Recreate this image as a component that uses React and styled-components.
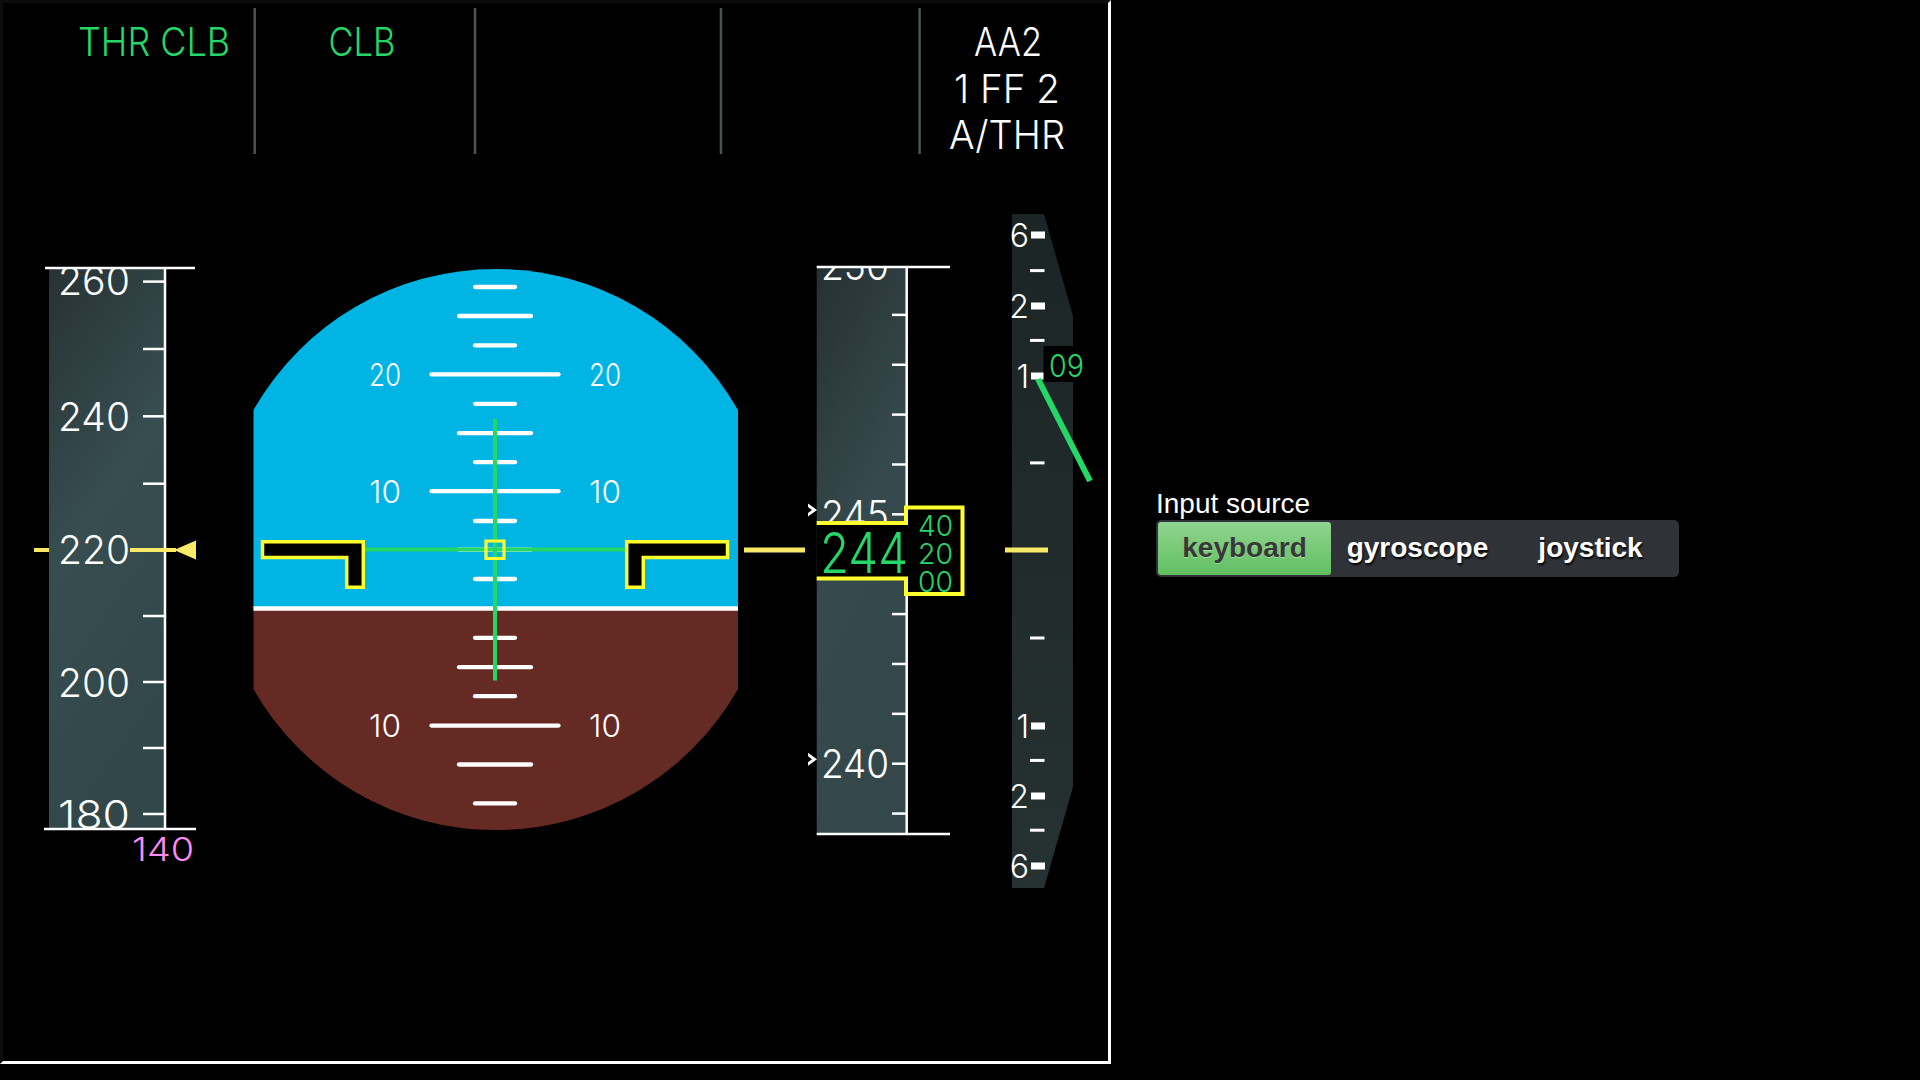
import React from 'react';
import styled, { createGlobalStyle } from 'styled-components';

const GREEN = '#24d767';
const YELLOW = '#ffff2e';
const PALE_YELLOW = '#f8ea66';
const MAGENTA = '#ff8cf4';
const WHITE = '#ffffff';
const SKY = '#00b4e3';
const GROUND = '#662a24';
const ECAM_FONT = '"Inter", "DejaVu Sans", sans-serif';

const GlobalStyle = createGlobalStyle`
  html, body {
    margin: 0;
    padding: 0;
    background: #000;
  }
  body {
    font-family: "Liberation Sans", Arial, sans-serif;
  }
`;

const Page = styled.div`
  display: flex;
  align-items: center;
  gap: 45px;
  height: 1064px;
`;

const Panel = styled.div`
  flex: none;
  width: 1105px;
  height: 1058px;
  border-style: solid;
  border-width: 3px;
  border-color: #0c0c0c #ffffff #ffffff #0c0c0c;
  background: #000;
`;

const Display = styled.svg`
  display: block;
  width: 1105px;
  height: 1058px;
`;

const Control = styled.div`
  display: flex;
  flex-direction: column;
`;

const ControlLabel = styled.div`
  font-family: "Liberation Sans", Arial, sans-serif;
  font-size: 28px;
  line-height: 32px;
  color: #fff;
`;

const Segmented = styled.div`
  display: grid;
  grid-template-columns: repeat(3, 1fr);
  box-sizing: border-box;
  width: 523px;
  height: 57px;
  padding: 2px;
  background: #2f3237;
  border-radius: 5px;
`;

const SegButton = styled.button`
  border: none;
  margin: 0;
  padding: 0;
  border-radius: 3px;
  font-family: "Liberation Sans", Arial, sans-serif;
  font-weight: bold;
  font-size: 28px;
  cursor: pointer;
  background: ${(p) => (p.$active ? 'linear-gradient(#90d390, #61c061)' : 'transparent')};
  color: ${(p) => (p.$active ? '#383838' : '#ffffff')};
  text-shadow: ${(p) => (p.$active ? '0 1px 0 rgba(255,255,255,0.35)' : '1px 2px 2px rgba(0,0,0,0.9)')};
`;

/* ---------- SVG parts ---------- */

const FmaDivider = styled.line`
  stroke: #495454;
  stroke-width: 2.5;
`;

const FmaText = styled.text`
  font-family: ${ECAM_FONT};
  font-weight: 300;
  font-size: 39px;
  fill: ${(p) => p.$color};
  text-anchor: middle;
`;

const TapeBody = styled.rect``;

const ScaleLine = styled.line`
  stroke: ${(p) => p.$color || WHITE};
  stroke-width: ${(p) => p.$w || 2.5};
  stroke-linecap: ${(p) => p.$cap || 'butt'};
`;

const TapeNumber = styled.text`
  font-family: ${ECAM_FONT};
  font-weight: 300;
  font-size: ${(p) => p.$size || 40}px;
  fill: ${(p) => p.$color || WHITE};
  text-anchor: end;
`;

const PitchLabel = styled.text`
  font-family: ${ECAM_FONT};
  font-weight: 300;
  font-size: 31px;
  fill: ${WHITE};
  text-anchor: ${(p) => p.$anchor};
`;

const Symbol = styled.path`
  fill: ${(p) => p.$fill || 'none'};
  stroke: ${(p) => p.$stroke || 'none'};
  stroke-width: ${(p) => p.$w || 3.5};
  stroke-linejoin: miter;
`;

const Readout = styled.text`
  font-family: ${ECAM_FONT};
  font-weight: 300;
  font-size: ${(p) => p.$size}px;
  fill: ${GREEN};
`;

const VsLabel = styled.text`
  font-family: ${ECAM_FONT};
  font-weight: 300;
  font-size: 32px;
  fill: ${WHITE};
  text-anchor: end;
`;

const Block = styled.rect`
  fill: ${(p) => p.$fill};
`;

/* ---------- data ---------- */

const fmaDividers = [254.7, 475, 721, 919.6];

const speedTicks = [281.6, 349, 416.3, 483.7, 549.8, 616, 682, 748, 814];
const speedLabels = [
  { v: '260', y: 280 },
  { v: '240', y: 416.3 },
  { v: '220', y: 549.8 },
  { v: '200', y: 682 },
  { v: '180', y: 814 },
];

const pitchMarks = [
  { y: 287, w: 40 },
  { y: 316, w: 72 },
  { y: 345.4, w: 40 },
  { y: 374.4, w: 127, label: '20' },
  { y: 403.8, w: 40 },
  { y: 433.2, w: 72 },
  { y: 462.2, w: 40 },
  { y: 491.2, w: 127, label: '10' },
  { y: 521, w: 40 },
  { y: 549.6, w: 72 },
  { y: 579, w: 40 },
  { y: 637.8, w: 40 },
  { y: 667.2, w: 72 },
  { y: 696.2, w: 40 },
  { y: 725.6, w: 127, label: '10' },
  { y: 764.5, w: 72 },
  { y: 803.4, w: 40 },
];

const altTicks = Array.from({ length: 12 }, (_, i) => 265 + i * 49.87);
const altLabels = [
  { v: '250', y: 265 },
  { v: '245', y: 514.4 },
  { v: '240', y: 763.7 },
];

const vsMajor = [
  { v: '6', y: 235 },
  { v: '2', y: 306 },
  { v: '1', y: 376 },
  { v: '1', y: 726 },
  { v: '2', y: 796 },
  { v: '6', y: 866 },
];
const vsMinor = [270.6, 340.4, 462.9, 638, 760.4, 830.2];

const drum = [
  { v: '60', y: 496.5 },
  { v: '40', y: 525 },
  { v: '20', y: 553.5 },
  { v: '00', y: 581.6 },
];

const ATT_CX = 495;
const attOutline =
  'M253.5,410 A278.6,278.6 0 0 1 738,410 L738,689 A278.6,278.6 0 0 1 253.5,689 Z';

function Pfd() {
  return (
    <Display viewBox="3 3 1105 1058">
      <defs>
        <linearGradient id="spdGrad" x1="0" y1="0" x2="0.3" y2="1">
          <stop offset="0" stopColor="#273234" />
          <stop offset="0.5" stopColor="#374d50" />
          <stop offset="1" stopColor="#32474a" />
        </linearGradient>
        <linearGradient id="altGrad" x1="0" y1="0" x2="0.3" y2="1">
          <stop offset="0" stopColor="#263033" />
          <stop offset="0.55" stopColor="#364a4d" />
          <stop offset="1" stopColor="#34484b" />
        </linearGradient>
        <linearGradient id="vsGrad" x1="0" y1="0" x2="0" y2="1">
          <stop offset="0" stopColor="#1c2526" />
          <stop offset="1" stopColor="#263132" />
        </linearGradient>
        <clipPath id="spdClip">
          <rect x="40" y="268" width="125" height="561" />
        </clipPath>
        <clipPath id="altClip">
          <rect x="800" y="267" width="107" height="567" />
        </clipPath>
        <clipPath id="attClip">
          <path d={attOutline} />
        </clipPath>
        <clipPath id="drumClip">
          <rect x="906" y="507.5" width="58" height="87" />
        </clipPath>
      </defs>

      {/* FMA */}
      {fmaDividers.map((x) => (
        <FmaDivider key={x} x1={x} x2={x} y1={8} y2={154} />
      ))}
      <FmaText $color={GREEN} x={154} y={56} textLength={152} lengthAdjust="spacingAndGlyphs">THR CLB</FmaText>
      <FmaText $color={GREEN} x={362} y={56} textLength={67} lengthAdjust="spacingAndGlyphs">CLB</FmaText>
      <FmaText $color={WHITE} x={1008} y={56} textLength={68} lengthAdjust="spacingAndGlyphs">AA2</FmaText>
      <FmaText $color={WHITE} x={1007} y={102.5} textLength={106} lengthAdjust="spacingAndGlyphs">1 FF 2</FmaText>
      <FmaText $color={WHITE} x={1007} y={149} textLength={116} lengthAdjust="spacingAndGlyphs">A/THR</FmaText>

      {/* Speed tape */}
      <TapeBody x={49} y={268} width={116} height={561} fill="url(#spdGrad)" />
      <g clipPath="url(#spdClip)">
        {speedTicks.map((y) => (
          <ScaleLine key={y} x1={143} x2={165} y1={y} y2={y} />
        ))}
        {speedLabels.map((l) => (
          <TapeNumber key={l.v} x={130} y={l.y + 14.5} textLength={72} lengthAdjust="spacingAndGlyphs">{l.v}</TapeNumber>
        ))}
      </g>
      <ScaleLine x1={165} x2={165} y1={268} y2={829} />
      <ScaleLine x1={45} x2={195} y1={268} y2={268} />
      <ScaleLine x1={44} x2={196} y1={829} y2={829} />
      <ScaleLine $color={PALE_YELLOW} $w={4} x1={34} x2={49} y1={550} y2={550} />
      <ScaleLine $color={PALE_YELLOW} $w={4} x1={130} x2={176} y1={550} y2={550} />
      <Symbol $fill={PALE_YELLOW} $w={0} d="M174,550 L196,540.5 L196,559.5 Z" />
      <TapeNumber $color={MAGENTA} $size={33} x={194} y={861} textLength={62} lengthAdjust="spacingAndGlyphs">140</TapeNumber>

      {/* Attitude */}
      <g clipPath="url(#attClip)">
        <Block $fill={SKY} x={250} y={260} width={492} height={349} />
        <Block $fill={GROUND} x={250} y={608} width={492} height={230} />
        <ScaleLine $w={4.5} x1={250} x2={742} y1={608.5} y2={608.5} />
      </g>
      {pitchMarks.map((m) => (
        <ScaleLine key={m.y} $w={4.3} $cap="round" x1={ATT_CX - m.w / 2} x2={ATT_CX + m.w / 2} y1={m.y} y2={m.y} />
      ))}
      {pitchMarks
        .filter((m) => m.label)
        .map((m) => (
          <React.Fragment key={`l${m.y}`}>
            <PitchLabel $anchor="end" x={401} y={m.y + 11.3} textLength={32} lengthAdjust="spacingAndGlyphs">{m.label}</PitchLabel>
            <PitchLabel $anchor="start" x={589} y={m.y + 11.3} textLength={32} lengthAdjust="spacingAndGlyphs">{m.label}</PitchLabel>
          </React.Fragment>
        ))}
      <ScaleLine $color={GREEN} $w={4} x1={ATT_CX} x2={ATT_CX} y1={419} y2={680.5} />
      <ScaleLine $color={GREEN} $w={4} x1={365} x2={625} y1={549.6} y2={549.6} />
      <Symbol $fill="#000" $stroke={YELLOW} d="M262.5,541.7 H363.3 V587.3 H346.7 V557.5 H262.5 Z" />
      <Symbol $fill="#000" $stroke={YELLOW} d="M727.5,541.7 H626.7 V587.3 H643.3 V557.5 H727.5 Z" />
      <Symbol $stroke={YELLOW} $w={3.2} d="M486,541 H504 V558.5 H486 Z" />
      <ScaleLine $color={PALE_YELLOW} $w={5} x1={744} x2={805} y1={550} y2={550} />

      {/* Altitude tape */}
      <TapeBody x={816.7} y={267} width={90} height={567} fill="url(#altGrad)" />
      <g clipPath="url(#altClip)">
        {altTicks.map((y) => (
          <ScaleLine key={y} x1={892} x2={906.7} y1={y} y2={y} />
        ))}
        {altLabels.map((l) => (
          <React.Fragment key={l.v}>
            <TapeNumber x={889} y={l.y + 14.5} textLength={68} lengthAdjust="spacingAndGlyphs">{l.v}</TapeNumber>
            <Symbol $fill={WHITE} $w={0} d={`M808,${l.y - 11} L817,${l.y - 4.5} L808,${l.y + 2} L808,${l.y - 1.5} L812,${l.y - 4.5} L808,${l.y - 7.5} Z`} />
          </React.Fragment>
        ))}
      </g>
      <ScaleLine x1={906.7} x2={906.7} y1={267} y2={834} />
      <ScaleLine x1={816.7} x2={950} y1={267} y2={267} />
      <ScaleLine x1={816.7} x2={950} y1={834} y2={834} />
      <Symbol
        $fill="#000"
        $stroke={YELLOW}
        $w={4}
        d="M816.7,523 H906 V507.5 H962.5 V594 H906 V578.5 H816.7"
      />
      <g clipPath="url(#drumClip)">
        {drum.map((d) => (
          <Readout key={d.v} $size={29} x={918} y={d.y + 10.8} textLength={35} lengthAdjust="spacingAndGlyphs">{d.v}</Readout>
        ))}
      </g>
      <Readout $size={56} x={820} y={573} textLength={88} lengthAdjust="spacingAndGlyphs">244</Readout>

      {/* Vertical speed */}
      <Symbol $fill="url(#vsGrad)" $w={0} d="M1012,214 H1044 L1073,316 V787 L1044,888 H1012 Z" />
      {vsMajor.map((m) => (
        <React.Fragment key={`${m.v}${m.y}`}>
          <Block $fill={WHITE} x={1031} y={m.y - 3.5} width={14} height={7} />
          <VsLabel x={1029} y={m.y + 11.6}>{m.v}</VsLabel>
        </React.Fragment>
      ))}
      {vsMinor.map((y) => (
        <Block key={y} $fill={WHITE} x={1030} y={y - 1.5} width={14.5} height={3} />
      ))}
      <Block $fill={PALE_YELLOW} x={1005} y={547.5} width={43} height={5} />
      <ScaleLine $color={GREEN} $w={6} x1={1038} x2={1090} y1={379} y2={481} />
      <Block $fill="#000" x={1043.5} y={346} width={36} height={36} />
      <Readout $size={31} x={1049} y={376.5} textLength={35} lengthAdjust="spacingAndGlyphs">09</Readout>
    </Display>
  );
}

const sources = ['keyboard', 'gyroscope', 'joystick'];

export default function App() {
  return (
    <>
      <GlobalStyle />
      <Page>
        <Panel>
          <Pfd />
        </Panel>
        <Control>
          <ControlLabel>Input source</ControlLabel>
          <Segmented>
            {sources.map((s) => (
              <SegButton key={s} $active={s === 'keyboard'}>
                {s}
              </SegButton>
            ))}
          </Segmented>
        </Control>
      </Page>
    </>
  );
}
